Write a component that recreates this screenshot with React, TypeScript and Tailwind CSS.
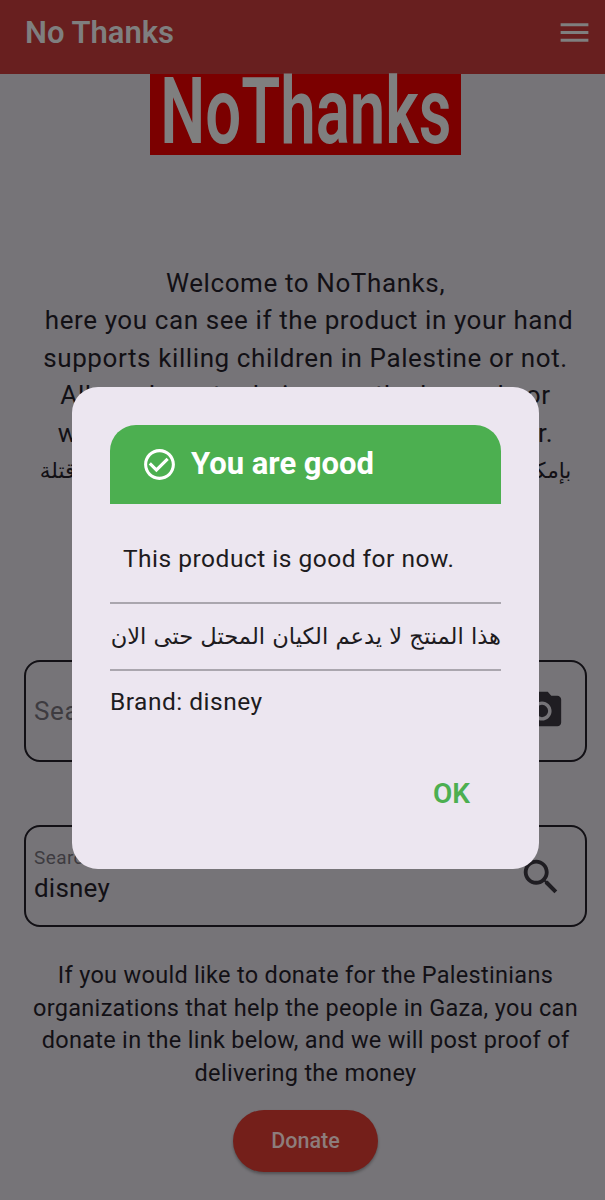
function MaterialIcon({ d, size, className }: { d: string; size: number; className?: string }) {
  return (
    <svg width={size} height={size} viewBox="0 0 24 24" fill="currentColor" className={className}>
      <path d={d} />
    </svg>
  );
}

const MENU = "M3 18h18v-2H3v2zm0-5h18v-2H3v2zm0-7v2h18V6H3z";
const CAMERA = "M12 15.2a3.2 3.2 0 1 0 0-6.4 3.2 3.2 0 0 0 0 6.4zM9 2 7.17 4H4c-1.1 0-2 .9-2 2v12c0 1.1.9 2 2 2h16c1.1 0 2-.9 2-2V6c0-1.1-.9-2-2-2h-3.17L15 2H9zm3 15c-2.76 0-5-2.24-5-5s2.24-5 5-5 5 2.24 5 5-2.24 5-5 5z";
const SEARCH = "M15.5 14h-.79l-.28-.27C15.41 12.59 16 11.11 16 9.5 16 5.91 13.09 3 9.5 3S3 5.91 3 9.5 5.91 16 9.5 16c1.61 0 3.09-.59 4.23-1.57l.27.28v.79l5 4.99L20.49 19l-4.99-5zm-6 0C7.01 14 5 11.99 5 9.5S7.01 5 9.5 5 14 7.01 14 9.5 11.99 14 9.5 14z";
const CHECK = "M16.59 7.58 10 14.17l-3.59-3.58L5 12l5 5 8-8zM12 2C6.48 2 2 6.48 2 12s4.48 10 10 10 10-4.48 10-10S17.52 2 12 2zm0 18c-4.42 0-8-3.58-8-8s3.58-8 8-8 8 3.58 8 8-3.58 8-8 8z";

export default function App() {
  return (
    <div className="relative h-[1200px] w-[605px] overflow-hidden bg-[#767478] font-['Roboto',sans-serif] text-[#121015]">
      <header className="flex h-[74px] items-center justify-between bg-[#681f1f] pb-[10px] pl-[25px] pr-[12px]">
        <span className="text-[31px] font-semibold leading-none text-[#7f7f7f]">No Thanks</span>
        <MaterialIcon d={MENU} size={37} className="text-[#7f7f7f]" />
      </header>

      <div className="pl-[6px]">
        <div className="mx-auto flex h-[81px] w-[311px] items-start justify-center bg-[#7b0000]">
          <span className="scale-x-[0.69] whitespace-nowrap text-[92px] font-semibold leading-[76px] text-[#7f7f7f]">NoThanks</span>
        </div>

        <section className="mt-[110px] text-center text-[26px] leading-[37.4px] tracking-[0.6px]">
          <p>Welcome to NoThanks,</p>
          <p className="whitespace-pre"> here you can see if the product in your hand</p>
          <p>supports killing children in Palestine or not.</p>
          <p>All you have to do is scan the barcode or</p>
          <p>write the product name in the search bar.</p>
          <p dir="rtl" className="font-['DejaVu_Sans',sans-serif] text-[21.6px] leading-[37px] tracking-normal">بإمكانك هنا معرفة ما إذا كان المنتج الذي في يدك يدعم قتلة</p>
        </section>

        <div className="mx-[18px] mt-[171px] flex h-[102px] items-center justify-between rounded-[16px] border-2 border-[#121015] pl-[8px] pr-[20px]">
          <span className="text-[26px] tracking-[0.6px] text-[#3d3b40]">Search by barcode</span>
          <MaterialIcon d={CAMERA} size={46} className="text-[#1f1d22]" />
        </div>

        <div className="mx-[18px] mt-[63px] flex h-[102px] items-center justify-between rounded-[16px] border-2 border-[#121015] pl-[8px] pr-[21px]">
          <div className="flex flex-col">
            <span className="text-[19px] leading-[24px] tracking-[0.4px] text-[#3d3b40]">Search by name</span>
            <span className="text-[26px] leading-[36px] tracking-[0.2px]">disney</span>
          </div>
          <MaterialIcon d={SEARCH} size={46} className="mt-[2px] text-[#1f1d22]" />
        </div>

        <p className="mx-auto mt-[32px] w-[560px] text-center text-[23.5px] leading-[32.6px] tracking-[0.3px]">
          If you would like to donate for the Palestinians organizations that help the people in Gaza, you can donate in the link below, and we will post proof of delivering the money
        </p>

        <div className="mt-[21px] flex justify-center">
          <button className="h-[62px] w-[145px] rounded-full bg-[#741f1a] text-[21.5px] font-medium text-[#8d7d7c] shadow-[0_2px_3px_rgba(0,0,0,0.3)]">Donate</button>
        </div>
      </div>

      <div className="absolute left-[72px] top-[387px] h-[482px] w-[467px] rounded-[26px] bg-[#ece6f0] px-[38px] pt-[38px]">
        <div className="flex h-[79px] items-center gap-[13px] rounded-t-[26px] bg-[#4caf50] pl-[31px]">
          <MaterialIcon d={CHECK} size={37} className="text-white" />
          <span className="text-[31px] font-bold text-white">You are good</span>
        </div>
        <p className="flex h-[100px] items-center border-b-2 border-[#aaa6ae] pl-[13px] pt-[12px] text-[24.5px] tracking-[0.5px] text-[#1d1b20]">This product is good for now.</p>
        <p dir="rtl" className="flex h-[67px] items-center whitespace-nowrap border-b-2 border-[#aaa6ae] font-['DejaVu_Sans',sans-serif] text-[22.6px] text-[#1d1b20]">هذا المنتج لا يدعم الكيان المحتل حتى الان</p>
        <p className="mt-[13px] text-[24.5px] leading-[36px] tracking-[0.5px] text-[#1d1b20]">Brand: disney</p>
        <div className="mt-[54px] flex justify-end pr-[31px]">
          <span className="text-[28px] font-semibold leading-[40px] text-[#4caf50]">OK</span>
        </div>
      </div>
    </div>
  );
}
